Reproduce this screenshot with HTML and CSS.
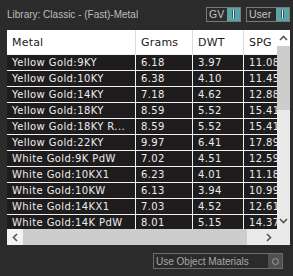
FILE: index.html
```html
<!DOCTYPE html>
<html lang="en">
<head>
    <meta charset="UTF-8">
    <title>Library - Metal</title>
    <link rel="stylesheet" href="styles.css">
</head>
<body>
    <div class="topbar">
        <div class="title">Library: Classic - (Fast)-Metal</div>
        <div class="toggle gv">
            <span>GV</span>
            <span class="switch"><i></i></span>
        </div>
        <div class="toggle user">
            <span>User</span>
            <span class="switch"><i></i></span>
        </div>
    </div>

    <div class="grid">
        <div class="viewport">
            <div class="rows">
                <div class="row head">
                    <div>Metal</div><div>Grams</div><div>DWT</div><div>SPG</div>
                </div>
                <div class="row"><div>Yellow Gold:9KY</div><div>6.18</div><div>3.97</div><div>11.08</div></div>
                <div class="row"><div>Yellow Gold:10KY</div><div>6.38</div><div>4.10</div><div>11.45</div></div>
                <div class="row"><div>Yellow Gold:14KY</div><div>7.18</div><div>4.62</div><div>12.88</div></div>
                <div class="row"><div>Yellow Gold:18KY</div><div>8.59</div><div>5.52</div><div>15.41</div></div>
                <div class="row"><div title="Yellow Gold:18KY Rose">Yellow Gold:18KY R...</div><div>8.59</div><div>5.52</div><div>15.41</div></div>
                <div class="row"><div>Yellow Gold:22KY</div><div>9.97</div><div>6.41</div><div>17.89</div></div>
                <div class="row"><div>White Gold:9K PdW</div><div>7.02</div><div>4.51</div><div>12.59</div></div>
                <div class="row"><div>White Gold:10KX1</div><div>6.23</div><div>4.01</div><div>11.18</div></div>
                <div class="row"><div>White Gold:10KW</div><div>6.13</div><div>3.94</div><div>10.99</div></div>
                <div class="row"><div>White Gold:14KX1</div><div>7.03</div><div>4.52</div><div>12.61</div></div>
                <div class="row"><div>White Gold:14K PdW</div><div>8.01</div><div>5.15</div><div>14.37</div></div>
            </div>
        </div>

        <div class="vscroll">
            <div class="btn up">
                <svg width="9" height="6" viewBox="0 0 9 6"><path d="M1 5 L4.5 1.5 L8 5" fill="none" stroke="#555" stroke-width="1.6"/></svg>
            </div>
            <div class="thumb"></div>
            <div class="track"></div>
            <div class="btn down">
                <svg width="9" height="6" viewBox="0 0 9 6"><path d="M1 1 L4.5 4.5 L8 1" fill="none" stroke="#555" stroke-width="1.6"/></svg>
            </div>
        </div>

        <div class="hscroll">
            <div class="btn left">
                <svg width="6" height="9" viewBox="0 0 6 9"><path d="M5 1 L1.5 4.5 L5 8" fill="none" stroke="#555" stroke-width="1.6"/></svg>
            </div>
            <div class="thumb"></div>
            <div class="track"></div>
            <div class="btn right">
                <svg width="6" height="9" viewBox="0 0 6 9"><path d="M1 1 L4.5 4.5 L1 8" fill="none" stroke="#555" stroke-width="1.6"/></svg>
            </div>
            <div class="corner"></div>
        </div>
    </div>

    <div class="footer">
        <div class="check">
            <span>Use Object Materials</span>
            <span class="box"><i></i></span>
        </div>
    </div>
</body>
</html>
```

FILE: styles.css
```css
* {
    margin: 0;
    padding: 0;
    box-sizing: border-box;
}

body {
    width: 293px;
    height: 276px;
    background: #2b2b2b;
    font-family: 'Liberation Sans', Arial, sans-serif;
    overflow: hidden;
}

.topbar {
    height: 30px;
    display: flex;
    align-items: center;
    padding: 0 3px 2px 7px;
}

.title {
    flex: 1;
    color: #bdbdbd;
    font-size: 10px;
    white-space: nowrap;
}

.toggle {
    height: 15px;
    display: flex;
    align-items: center;
    justify-content: space-between;
    border: 1px solid #7a7a7a;
    color: #c4c4c4;
    font-size: 10.5px;
    padding-left: 2px;
}

.toggle.gv {
    width: 35px;
    margin-right: 5px;
}

.toggle.user {
    width: 44px;
}

.switch {
    width: 13px;
    height: 13px;
    background: #5aa3a6;
    display: flex;
    align-items: center;
    justify-content: center;
}

.switch i {
    width: 3px;
    height: 8px;
    background: #f4f4f4;
    border: 1px solid #2f5f60;
    border-width: 0 0.5px;
}

.grid {
    margin-left: 7px;
    width: 283px;
    display: grid;
    grid-template-columns: 270px 13px;
    grid-template-rows: 199px 16px;
}

.viewport {
    overflow: hidden;
    background: #1f1c1d;
}

.rows {
    display: grid;
    row-gap: 1px;
    background: #f2f2f2;
    width: 330px;
}

.row {
    display: grid;
    grid-template-columns: 128px 56px 50px 94px;
    column-gap: 1px;
    height: 15px;
    background: #f2f2f2;
}

.row div {
    background: #1f1c1d;
    color: #ececec;
    font-family: 'DejaVu Sans', Verdana, sans-serif;
    font-size: 10px;
    letter-spacing: 0.4px;
    line-height: 15px;
    padding-left: 5px;
    white-space: nowrap;
    overflow: hidden;
}

.row.head {
    height: 24px;
    background: #dcdcdc;
}

.row.head div {
    background: #fff;
    color: #1a1a1a;
    font-size: 11px;
    letter-spacing: 0.2px;
    line-height: 26px;
}

.vscroll {
    display: flex;
    flex-direction: column;
    background: #eaeaea;
}

.btn {
    display: flex;
    align-items: center;
    justify-content: center;
}

.vscroll .up {
    height: 16px;
    background: #fff;
}

.vscroll .thumb {
    height: 64px;
    background: #cdcdcd;
}

.vscroll .track {
    flex: 1;
}

.vscroll .down {
    height: 16px;
}

.hscroll {
    grid-column: 1 / 3;
    display: flex;
    background: #eaeaea;
}

.hscroll .left {
    width: 16px;
    background: #f3f3f3;
}

.hscroll .thumb {
    width: 224px;
    background: #cdcdcd;
}

.hscroll .track {
    flex: 1;
}

.hscroll .right {
    width: 17px;
}

.hscroll .corner {
    width: 13px;
}

.footer {
    display: flex;
    justify-content: flex-end;
    padding: 8px 10px 0 0;
}

.check {
    width: 130px;
    height: 16px;
    border: 1px solid #6c6c6c;
    display: flex;
    align-items: center;
    justify-content: space-between;
    padding-left: 2px;
    color: #a8a8a8;
    font-size: 10px;
}

.check .box {
    width: 14px;
    height: 14px;
    background: #505050;
    display: flex;
    align-items: center;
    justify-content: center;
}

.check .box i {
    width: 7px;
    height: 7px;
    border: 1px solid #9a9a9a;
    border-radius: 50%;
}
```
